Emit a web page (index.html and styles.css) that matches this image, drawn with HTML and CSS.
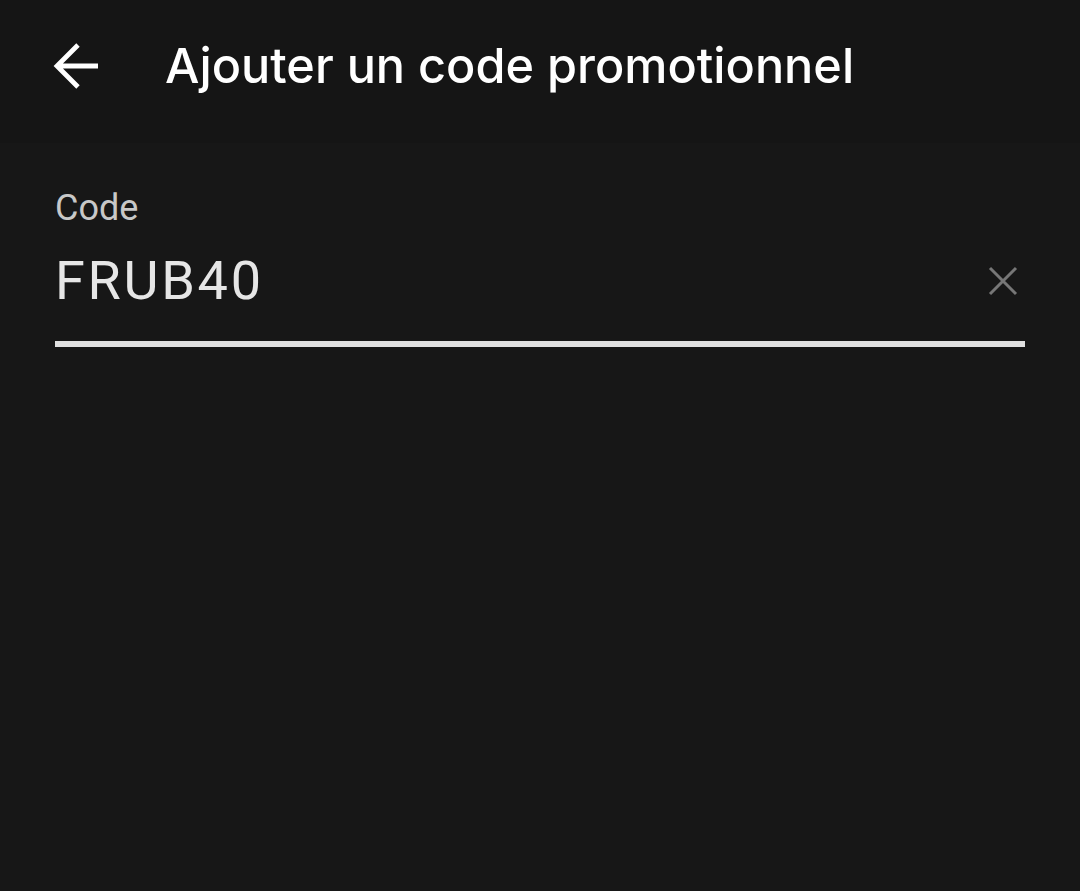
FILE: index.html
```html
<!DOCTYPE html>
<html lang="fr">
<head>
<meta charset="utf-8">
<link rel="stylesheet" href="styles.css">
</head>
<body>
<header class="topbar">
  <button class="back" aria-label="Retour">
    <svg width="48" height="48" viewBox="0 0 48 48"><path d="M47 24H7M27 3L6 24l21 21" fill="none" stroke="#fff" stroke-width="4.8" stroke-linecap="butt" stroke-linejoin="miter"/></svg>
  </button>
  <h1 class="title">Ajouter un code promotionnel</h1>
</header>
<main class="content">
  <div class="field">
    <label class="label">Code</label>
    <div class="input-row">
      <span class="value">FRUB40</span>
      <svg class="clear" width="30" height="30" viewBox="0 0 30 30"><path d="M2 2L28 28M28 2L2 28" stroke="#777" stroke-width="3"/></svg>
    </div>
  </div>
</main>
</body>
</html>
```
FILE: styles.css
```css
html, body {
  margin: 0;
  padding: 0;
  background: #171717;
  height: 100%;
}
body {
  font-family: Roboto, "Noto Sans", sans-serif;
  color: #fff;
}
.topbar {
  height: 143px;
  background: #151515;
  display: flex;
  align-items: center;
  padding: 37px 0 0 51px;
  box-sizing: border-box;
  align-content: flex-start;
  flex-wrap: wrap;
}
.back {
  background: none;
  border: 0;
  padding: 0;
  width: 48px;
  height: 48px;
  display: flex;
  margin-right: 66px;
}
.title {
  margin: 0;
  font-family: Inter, Roboto, sans-serif;
  font-size: 48.6px;
  line-height: 58px;
  font-weight: 500;
  color: #fff;
}
.content {
  padding: 0 55px;
}
.field {
  padding-top: 45px;
}
.label {
  display: block;
  font-size: 36px;
  color: #c8c8c8;
  line-height: 40px;
}
.input-row {
  display: flex;
  align-items: flex-start;
  justify-content: space-between;
  height: 104px;
  margin-top: 15px;
  border-bottom: 6px solid #e0e0e0;
  box-sizing: border-box;
}
.value {
  font-size: 54px;
  letter-spacing: 2.7px;
  color: #e6e6e6;
  line-height: 60px;
  margin-top: 8px;
}
.clear {
  margin-top: 23px;
  margin-right: 7px;
}
```
